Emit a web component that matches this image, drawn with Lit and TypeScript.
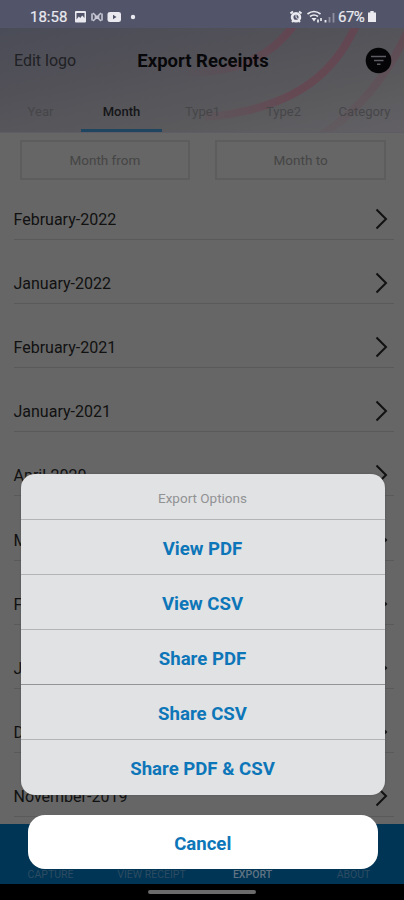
import { LitElement, html, css, svg } from "lit";
import { customElement } from "lit/decorators.js";
import { classMap } from "lit/directives/class-map.js";

const months = [
  "February-2022",
  "January-2022",
  "February-2021",
  "January-2021",
  "April-2020",
  "March-2020",
  "February-2020",
  "January-2020",
  "December-2019",
  "November-2019",
];
const tabs = ["Year", "Month", "Type1", "Type2", "Category"];
const actions = ["View PDF", "View CSV", "Share PDF", "Share CSV", "Share PDF & CSV"];
const navItems = ["CAPTURE", "VIEW RECEIPT", "EXPORT", "ABOUT"];

@customElement("status-bar")
class StatusBar extends LitElement {
  static styles = css`
    :host {
      display: flex;
      align-items: center;
      height: 28px;
      box-sizing: border-box;
      padding: 6px 28px 0 30px;
      background: #525469;
      color: #e9e9ef;
      font: 400 15px/20px Roboto, sans-serif;
    }
    .time { width: 43px; white-space: nowrap; -webkit-text-stroke: 0.2px; }
    .left { width: 64px; height: 16px; }
    .right { width: 46px; height: 16px; margin-left: auto; }
    .pct { margin-left: 2px; width: 29px; letter-spacing: -0.5px; white-space: nowrap; -webkit-text-stroke: 0.2px; }
    .battery { width: 8px; height: 16px; margin-left: 1px; }
  `;
  render() {
    return html`
      <span class="time">18:58</span>
      <svg class="left" viewBox="0 0 64 16" fill="#e9e9ef">
        <path fill-rule="evenodd" d="M3 2h9q1 0 1 1v9.500q0 1-1 1H3q-1 0-1-1V3q0-1 1-1ZM3.500 10.500 5.800 7.500 7.300 9 9.200 6.500 11.500 9V4H3.500Z" />
        <path d="M19 4.500v7M29 4.500v7M20 4l8 8M28 4l-8 8M21.500 8h5" stroke="#c6c7d2" stroke-width="1.600" fill="none" />
        <path fill-rule="evenodd" d="M37 3h8.500q2.500 0 2.500 2v6q0 2-2.500 2H37q-2.500 0-2.500-2V5q0-2 2.500-2ZM40 5.700v4.600l3.500-2.300Z" />
        <circle cx="60" cy="8" r="2.200" />
      </svg>
      <svg class="right" viewBox="0 0 46 16" fill="none" stroke="#e9e9ef">
        <circle cx="6" cy="8.200" r="3.900" stroke-width="2.700" />
        <path d="M.5 4.500 3 2.500M11.500 4.500 9 2.500M2 13l1.500-1.500M10 13l-1.500-1.500" stroke-width="2" />
        <path d="M6 6v2.500l1.700 1" stroke-width="1" />
        <path d="M17.500 5q6.500-5 13 0M20 7.500q4-3 8 0" stroke-width="1.700" />
        <path d="M21.500 9h5l-2.500 3.500z" fill="#e9e9ef" stroke="none" />
        <path d="M28 10.500v3M31 9v3" stroke-width="1.700" />
        <path d="M35.500 11v2.500" stroke-width="1.800" />
        <path d="M39.500 8v5.500M43.500 4v9.500" stroke="#8e8f9f" stroke-width="1.800" />
      </svg>
      <span class="pct">67%</span>
      <svg class="battery" viewBox="0 0 8 16" fill="#e9e9ef"><path d="M2.300 2h3.400v1.500H8V13H0V3.500h2.300Z" /></svg>
    `;
  }
}

@customElement("export-header")
class ExportHeader extends LitElement {
  static styles = css`
    :host {
      display: block;
      position: relative;
      height: 105px;
      box-sizing: border-box;
      overflow: hidden;
      border-bottom: 1px solid #5e5d65;
      background: linear-gradient(168deg, #4a4c57 0%, #525158 35%, #5a5a5d 72%, #626064 100%);
      font-family: Roboto, sans-serif;
      color: #151518;
    }
    .arcs { position: absolute; inset: 0; width: 404px; height: 105px; }
    .bar {
      position: relative;
      display: grid;
      grid-template-columns: 1fr auto 1fr;
      align-items: center;
      height: 65px;
      padding: 0 12px 0 14px;
    }
    .edit { font-size: 16px; color: #202124; }
    .title { font-size: 18.500px; font-weight: 700; color: #08080a; }
    .filter { width: 27px; height: 27px; justify-self: end; margin-top: -1px; }
    .tabs { position: relative; display: grid; grid-template-columns: repeat(5, 81px); height: 39px; }
    .tab {
      box-sizing: border-box;
      padding-top: 9px;
      text-align: center;
      font-size: 13px;
      line-height: 20px;
      color: #464649;
      border-bottom: 3px solid transparent;
    }
    .on { color: #151518; font-weight: 500; border-color: #1f4560; }
  `;
  render() {
    return html`
      <svg class="arcs" viewBox="0 0 404 105" fill="none" stroke-width="8">
        <defs>
          <linearGradient id="fade" gradientUnits="userSpaceOnUse" x1="180" y1="0" x2="290" y2="0">
            <stop offset="0" stop-color="#6b3f4d" stop-opacity="0" />
            <stop offset="1" stop-color="#6b3f4d" stop-opacity=".62" />
          </linearGradient>
          <linearGradient id="fall" gradientUnits="userSpaceOnUse" x1="0" y1="0" x2="0" y2="105">
            <stop offset="0" stop-color="#6b3f4d" stop-opacity=".5" />
            <stop offset="1" stop-color="#6b3f4d" stop-opacity=".1" />
          </linearGradient>
        </defs>
        <path d="M294-3C273 26 240 46 185 44" stroke="url(#fade)" />
        <path d="M357-5C332 53 285 82 205 89" stroke="url(#fade)" />
        <path d="M410-2C390 45 362 80 322 107" stroke="url(#fall)" />
      </svg>
      <div class="bar">
        <span class="edit">Edit logo</span>
        <span class="title">Export Receipts</span>
        <svg class="filter" viewBox="0 0 27 27">
          <circle cx="13.500" cy="13.500" r="12.800" fill="#050507" />
          <path d="M6 9.500h15M9 13.500h9.500M12 17.300h3.500" stroke="#5e5d63" stroke-width="1.400" />
        </svg>
      </div>
      <div class="tabs">
        ${tabs.map((t) => html`<span class=${classMap({ tab: true, on: t === "Month" })}>${t}</span>`)}
      </div>
    `;
  }
}

@customElement("export-sheet")
class ExportSheet extends LitElement {
  static styles = css`
    :host {
      display: flex;
      flex-direction: column;
      font-family: Roboto, sans-serif;
      color: #0d76b8;
      text-align: center;
    }
    .group {
      margin: 0 19.500px 20px 20.500px;
      height: 321px;
      border-radius: 14px;
      overflow: hidden;
      background: #e1e2e4;
      box-shadow: 0 0 2px #4448;
    }
    .head { height: 45px; line-height: 49px; font-size: 13.500px; color: #919294; }
    .action {
      height: 55.100px;
      box-sizing: border-box;
      border-top: 1.500px solid #b3b4b6;
      line-height: 58px;
      font-size: 18.600px;
      font-weight: 700;
    }
    .strong { border-color: #939496; }
    .cancel {
      height: 54px;
      margin: 0 26px 0 27.500px;
      border-radius: 17px;
      background: #fff;
      line-height: 58px;
      font-size: 18.600px;
      font-weight: 700;
    }
  `;
  render() {
    return html`
      <div class="group">
        <div class="head">Export Options</div>
        ${actions.map((a) => html`<div class=${classMap({ action: true, strong: a === "Share CSV" })}>${a}</div>`)}
      </div>
      <div class="cancel">Cancel</div>
    `;
  }
}

@customElement("app-root")
class AppRoot extends LitElement {
  static styles = css`
    :host {
      display: flex;
      flex-direction: column;
      position: relative;
      width: 404px;
      height: 900px;
      overflow: hidden;
      background: #666;
      font-family: Roboto, sans-serif;
    }
    .range { display: flex; gap: 25px; padding: 7px 18px 0 19.500px; height: 36px; flex: none; }
    .field {
      flex: 1;
      height: 40px;
      box-sizing: border-box;
      border: 2px solid #5d5d5d;
      text-align: center;
      font-size: 13.500px;
      line-height: 37px;
      color: #454545;
    }
    .list { flex: 1; min-height: 0; overflow: hidden; padding: 0 10px 0 13.500px; }
    .row {
      display: flex;
      justify-content: space-between;
      align-items: flex-end;
      height: 64.100px;
      box-sizing: border-box;
      padding: 0 6px 9px 0;
      border-bottom: 1px solid #5a5a5a;
      font-size: 16px;
      line-height: 20px;
      color: #111;
    }
    .chev { width: 13px; height: 22px; }
    .nav {
      flex: none;
      display: grid;
      grid-template-columns: repeat(4, 1fr);
      align-items: end;
      height: 60px;
      box-sizing: border-box;
      padding-bottom: 3px;
      background: #003555;
      color: #2d4c62;
      text-align: center;
      font-size: 10.500px;
      line-height: 13px;
    }
    .current { color: #617382; font-weight: 500; }
    .system { flex: none; display: flex; justify-content: center; height: 16px; background: #000; }
    .home { width: 108px; height: 4px; margin-top: 6px; border-radius: 2px; background: #6b6b6b; }
    .overlay { position: absolute; left: 0; right: 0; top: 474px; }
  `;
  render() {
    return html`
      <status-bar></status-bar>
      <export-header></export-header>
      <div class="range">
        <div class="field">Month from</div>
        <div class="field">Month to</div>
      </div>
      <div class="list">
        ${months.map(
          (m) => html`<div class="row">
            <span>${m}</span>
            <svg class="chev" viewBox="0 0 13 22">${svg`<path d="M1.500 1.500 11 11 1.500 20.500" fill="none" stroke="#111" stroke-width="2" />`}</svg>
          </div>`
        )}
      </div>
      <div class="nav">
        ${navItems.map((n) => html`<span class=${classMap({ current: n === "EXPORT" })}>${n}</span>`)}
      </div>
      <div class="system"><div class="home"></div></div>
      <export-sheet class="overlay"></export-sheet>
    `;
  }
}
